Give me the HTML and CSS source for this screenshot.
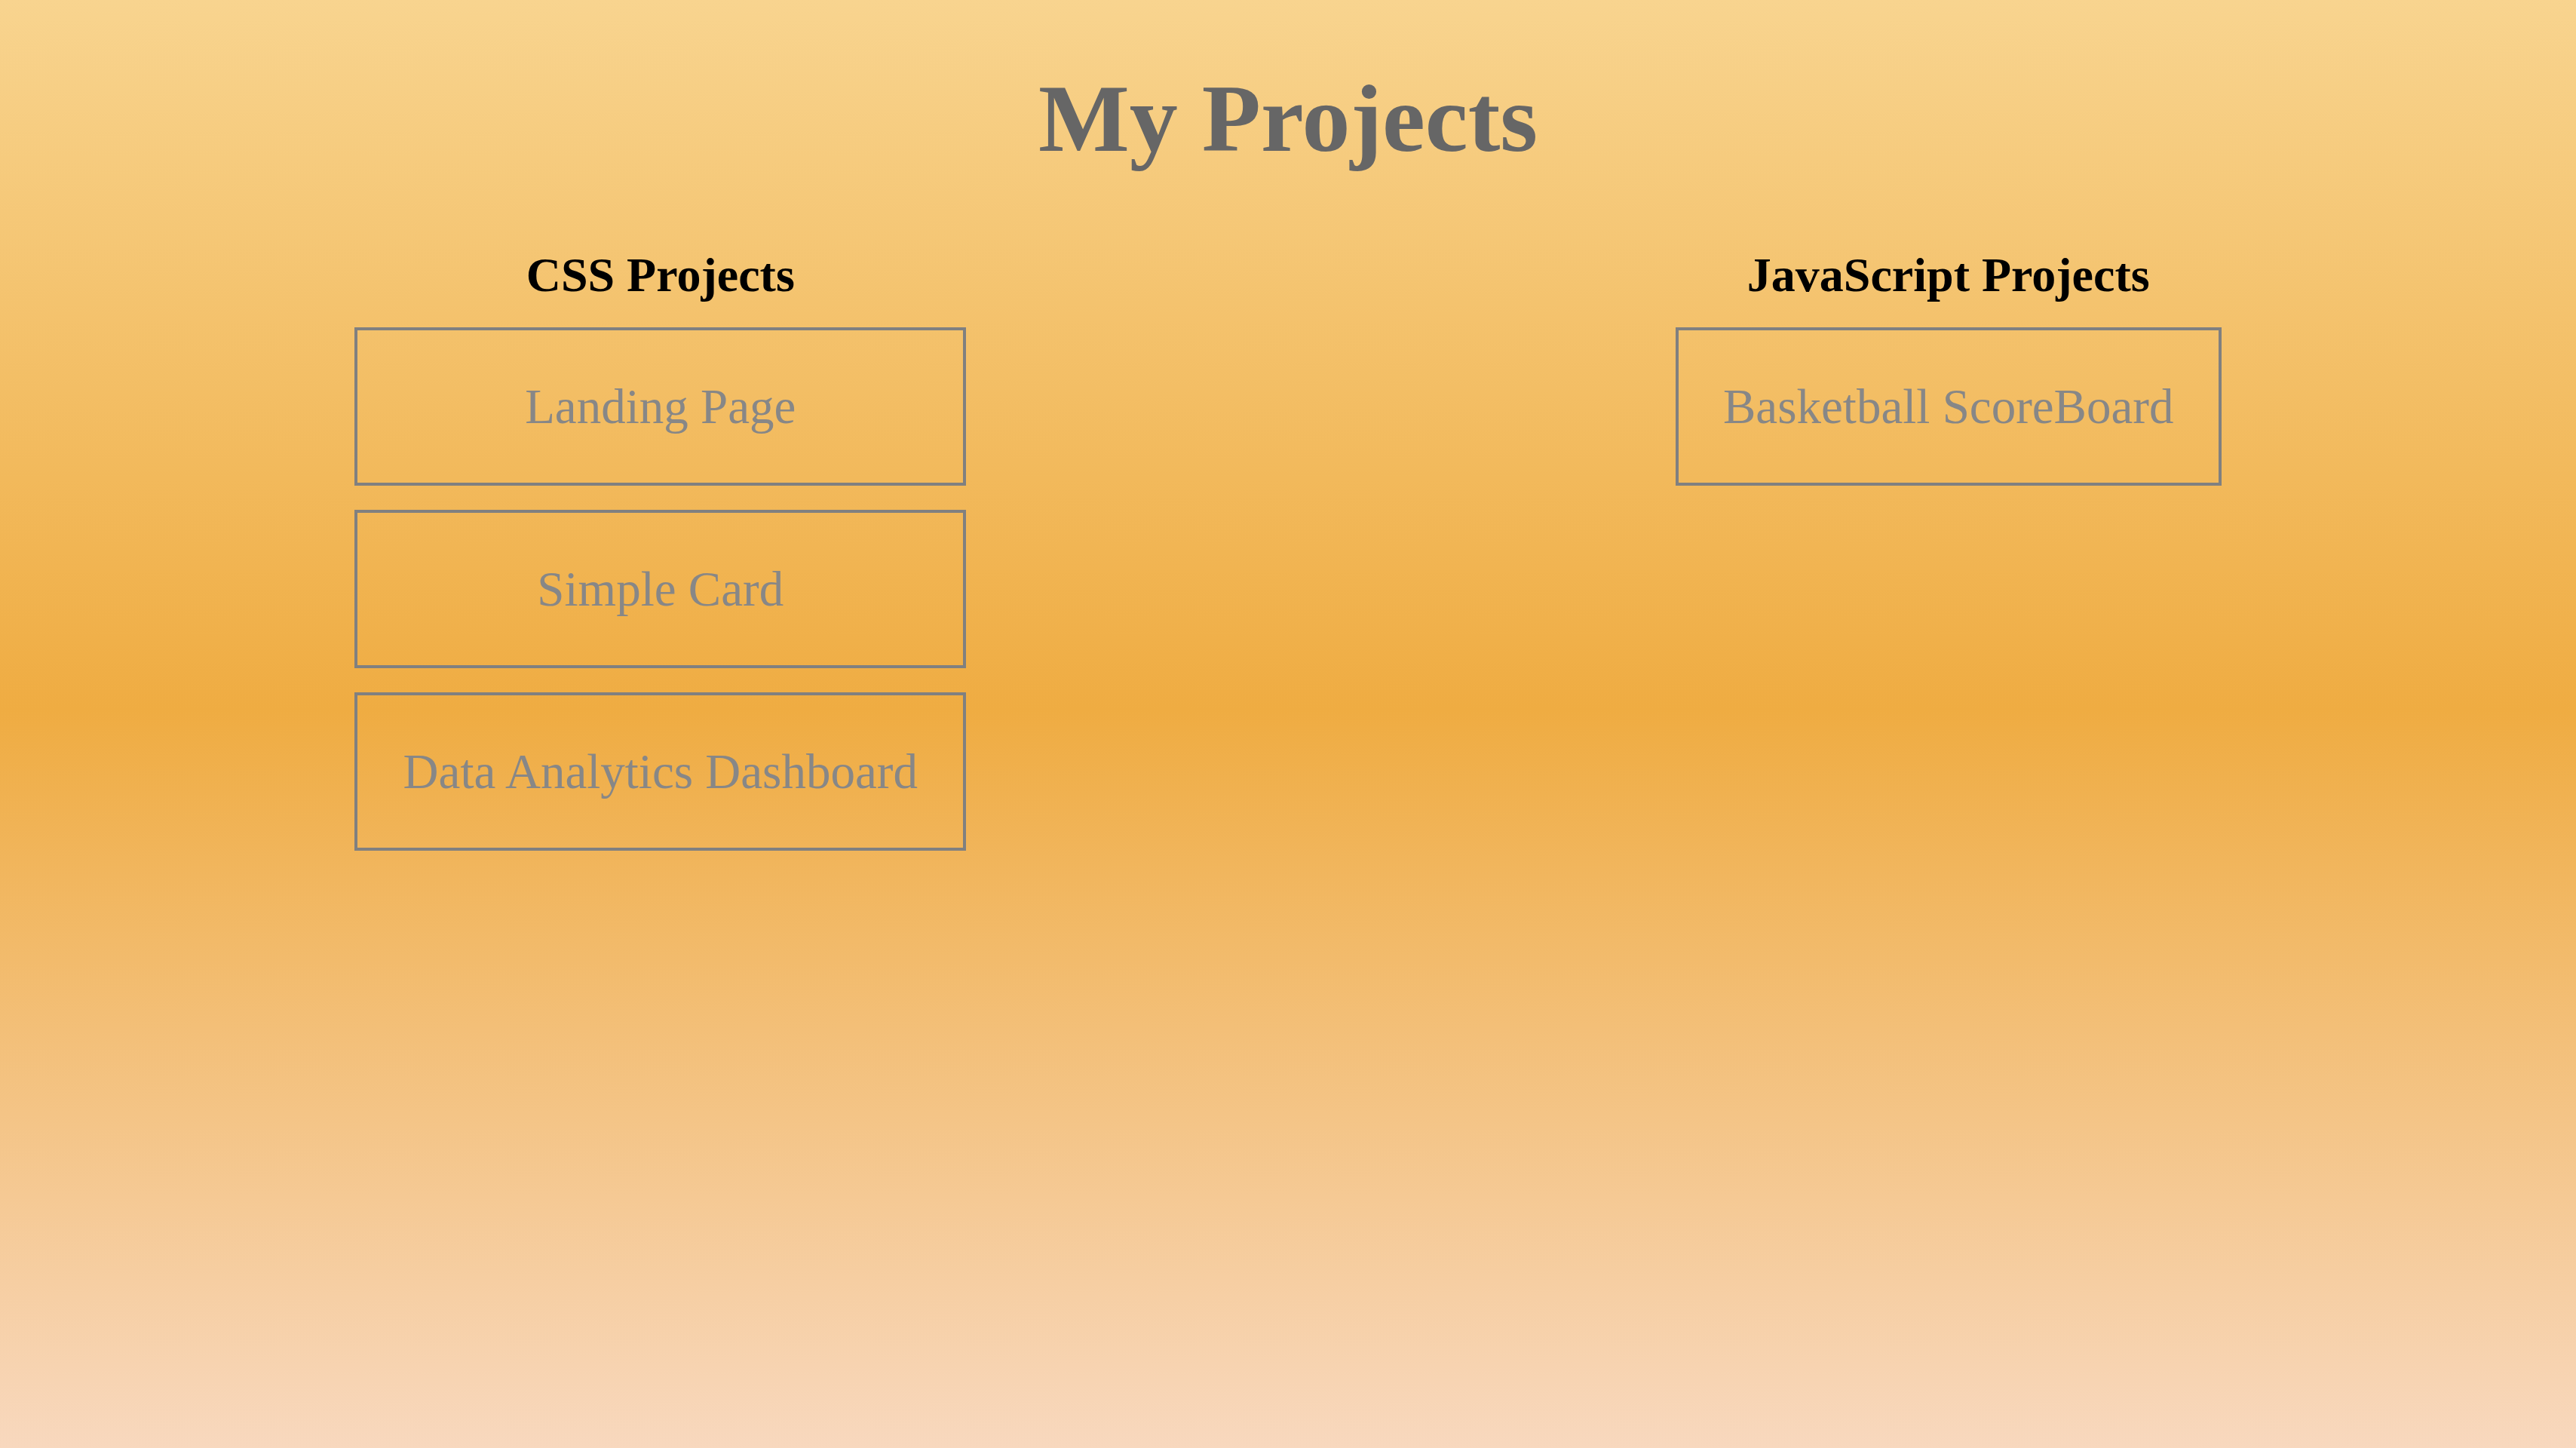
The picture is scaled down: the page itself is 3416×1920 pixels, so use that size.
FILE: index.html
```html
<!DOCTYPE html>
<html lang="en">
<head>
<meta charset="utf-8">
<title>My Projects</title>
<link rel="stylesheet" href="styles.css">
</head>
<body>
<h1 class="title">My Projects</h1>
<main class="columns">
  <section class="column column-css">
    <h2 class="column-title">CSS Projects</h2>
    <div class="project">Landing Page</div>
    <div class="project">Simple Card</div>
    <div class="project">Data Analytics Dashboard</div>
  </section>
  <section class="column column-js">
    <h2 class="column-title">JavaScript Projects</h2>
    <div class="project">Basketball ScoreBoard</div>
  </section>
</main>
</body>
</html>
```

FILE: styles.css
```css
html, body {
  margin: 0;
  padding: 0;
}

html {
  min-height: 100%;
  background: linear-gradient(to bottom, #f8d48f 0%, #efac42 49%, #f8d8be 100%);
}

body {
  min-height: 1920px;
  font-family: "Liberation Serif", "Times New Roman", serif;
}

.title {
  margin: 93px 0 0;
  font-size: 128px;
  line-height: 128px;
  font-weight: bold;
  text-align: center;
  color: #666666;
}

.columns {
  display: flex;
  justify-content: space-around;
  align-items: flex-start;
  margin-top: 112px;
}

.column {
  display: flex;
  flex-direction: column;
  gap: 32px;
}

.column-css {
  width: 811px;
}

.column-js {
  width: 724px;
}

.column-title {
  margin: 0 0 5px;
  font-size: 64px;
  line-height: 64px;
  font-weight: bold;
  text-align: center;
  color: #000000;
}

.project {
  border: 4px solid #808080;
  padding: 63px 0;
  font-size: 65px;
  line-height: 76px;
  text-align: center;
  color: #878787;
}
```
